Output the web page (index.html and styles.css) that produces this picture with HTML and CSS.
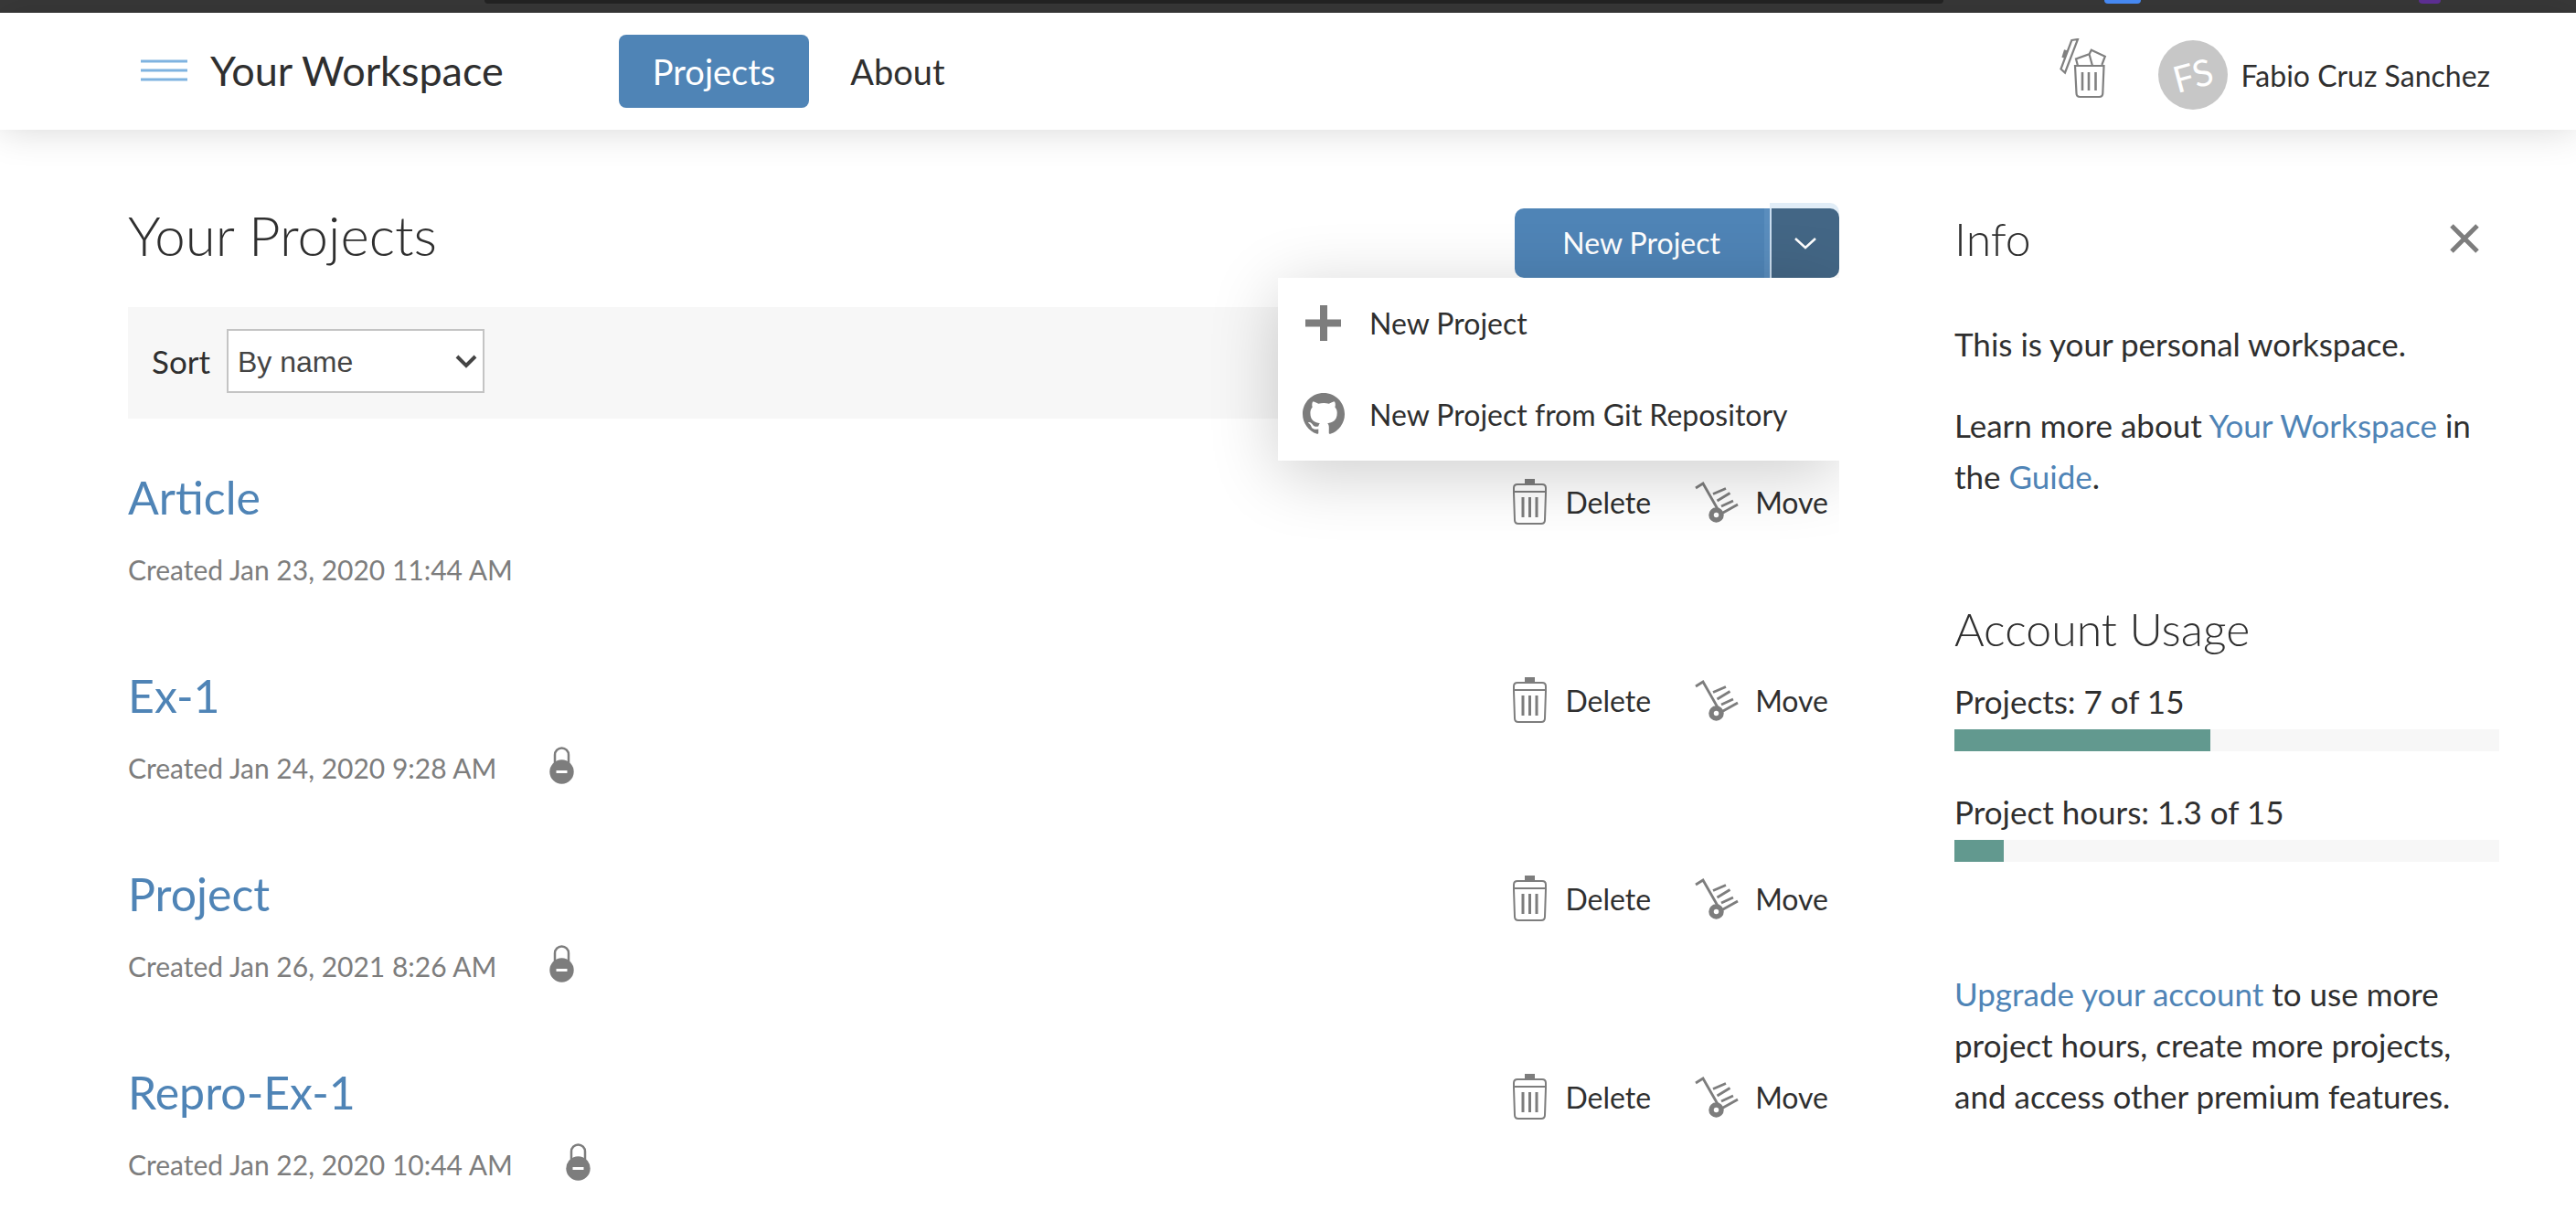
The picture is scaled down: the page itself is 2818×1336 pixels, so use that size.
FILE: index.html
```html
<!DOCTYPE html>
<html lang="en">
<head>
<meta charset="utf-8">
<title>Your Workspace</title>
<meta name="viewport" content="width=device-width, initial-scale=1">
<link rel="stylesheet" href="styles.css">
</head>
<body>
<svg class="sprite" aria-hidden="true">
  <symbol id="icon-trash" viewBox="0 0 40 52">
    <path d="M14 1h11v5H14z" fill="currentColor"/>
    <path d="M2 17V11q0-4 4-4h27q4 0 4 4v6" fill="none" stroke="currentColor" stroke-width="2"/>
    <path d="M1 15h37" stroke="currentColor" stroke-width="2"/>
    <path d="M2 16l1 30q0 4 4 4h25q4 0 4-4l1-30" fill="none" stroke="currentColor" stroke-width="2"/>
    <path d="M12 21v22M19.500 21v22M27 21v22" stroke="currentColor" stroke-width="3"/>
  </symbol>
  <symbol id="icon-move" viewBox="0 0 48 46">
    <path d="M1 8l8-5 16 28" fill="none" stroke="currentColor" stroke-width="2.800"/>
    <path d="M20 14.500l14-6M24.500 22l14-8.500M29 28l13-6M30 35.500l17-9.500" stroke="currentColor" stroke-width="2.800"/>
    <circle cx="23.500" cy="37.500" r="5.500" fill="none" stroke="currentColor" stroke-width="5.500"/>
  </symbol>
  <symbol id="icon-lock" viewBox="0 0 28 42">
    <path d="M6 18V9a7.500 7.500 0 0 1 15 0v9" fill="none" stroke="currentColor" stroke-width="2.500"/>
    <circle cx="13.500" cy="27.500" r="13.200" fill="currentColor"/>
    <path d="M7.500 27.500h12" stroke="#fff" stroke-width="3"/>
  </symbol>
</svg>

<div class="tabstrip" aria-hidden="true">
  <span class="tabstrip-address"></span>
  <span class="tabstrip-blue"></span>
  <span class="tabstrip-purple"></span>
</div>

<header class="header">
  <button class="menu-toggle" type="button" aria-label="Open menu">
    <svg width="52" height="24" viewBox="0 0 52 24"><path d="M0 2h51M0 12h51M0 22h51" stroke="#7fb3e0" stroke-width="3"/></svg>
  </button>
  <div class="brand">Your Workspace</div>
  <nav class="nav">
    <a class="nav-link nav-link-active" href="#projects">Projects</a>
    <a class="nav-link" href="#about">About</a>
  </nav>
  <div class="account">
    <button class="bin" type="button" aria-label="Trash">
      <svg width="52" height="80" viewBox="0 0 52 80" fill="none" stroke="#808080" stroke-width="2.200">
        <path d="M13.300 2l6.700-1L6 37.500l-4.500-4z"/>
        <path d="M6.700 12.700l-2.600 8.500" stroke-width="3.500"/>
        <path d="M17 30h31.500l-1.200 30q0 4-4 4H22.500q-4 0-4-4z"/>
        <path d="M20 30l-2-7.500 14.500-5.300L36 30M32.200 18l2.600-5.300 15 7L46.300 29"/>
        <path d="M25 37v20M32 37v20M39.500 37v20" stroke-width="2.600"/>
      </svg>
    </button>
    <span class="avatar"><span class="avatar-text">FS</span></span>
    <a class="account-name" href="#account">Fabio Cruz Sanchez</a>
  </div>
</header>

<div class="page">
  <main class="main">
    <div class="main-head">
      <h1 class="title">Your Projects</h1>
      <div class="split">
        <button class="split-main" type="button">New Project</button>
        <button class="split-toggle" type="button" aria-label="More options" aria-expanded="true">
          <svg width="26" height="16" viewBox="0 0 26 16"><path d="M2 3l11 10L24 3" fill="none" stroke="#fff" stroke-width="2.500"/></svg>
        </button>
        <div class="dropdown">
          <button class="dropdown-item" type="button">
            <svg width="46" height="46" viewBox="0 0 46 46"><path d="M23 4v39M3 23.500h39" stroke="#7d7d7d" stroke-width="8"/></svg>
            New Project
          </button>
          <button class="dropdown-item" type="button">
            <svg width="46" height="46" viewBox="0 0 16 16"><path fill="#7d7d7d" d="M8 0C3.580 0 0 3.580 0 8c0 3.540 2.290 6.530 5.470 7.590.4.070.55-.17.55-.38 0-.19-.010-.82-.010-1.490-2.010.37-2.530-.49-2.690-.94-.090-.23-.48-.94-.82-1.130-.28-.15-.68-.52-.010-.53.63-.010 1.080.58 1.230.82.72 1.210 1.870.87 2.330.66.070-.52.28-.87.51-1.070-1.780-.2-3.640-.89-3.640-3.950 0-.87.31-1.590.82-2.150-.080-.2-.36-1.020.080-2.120 0 0 .67-.21 2.200.82.64-.18 1.320-.27 2-.27s1.360.090 2 .27c1.530-1.040 2.200-.82 2.200-.82.44 1.100.16 1.920.080 2.120.51.56.82 1.270.82 2.150 0 3.070-1.870 3.750-3.650 3.950.29.25.54.73.54 1.480 0 1.070-.010 1.930-.010 2.200 0 .21.15.46.55.38A8.010 8.010 0 0 0 16 8c0-4.420-3.580-8-8-8z"/></svg>
            New Project from Git Repository
          </button>
        </div>
      </div>
    </div>

    <div class="toolbar">
      <label for="sort">Sort</label>
      <span class="select-box">
        <select id="sort" class="select"><option>By name</option><option>By date created</option></select>
        <svg class="select-arrow" width="24" height="16" viewBox="0 0 24 16"><path d="M2 2l10 10L22 2" fill="none" stroke="#444" stroke-width="4"/></svg>
      </span>
    </div>

    <ul class="projects" id="projects">
      <li class="project">
        <div class="project-head">
          <h2 class="project-title"><a href="#article">Article</a></h2>
          <button class="action" type="button"><svg width="40" height="52"><use href="#icon-trash"/></svg>Delete</button>
          <button class="action" type="button"><svg width="48" height="46"><use href="#icon-move"/></svg>Move</button>
        </div>
        <div class="project-meta">Created Jan 23, 2020 11:44 AM</div>
      </li>
      <li class="project">
        <div class="project-head">
          <h2 class="project-title"><a href="#ex-1">Ex-1</a></h2>
          <button class="action" type="button"><svg width="40" height="52"><use href="#icon-trash"/></svg>Delete</button>
          <button class="action" type="button"><svg width="48" height="46"><use href="#icon-move"/></svg>Move</button>
        </div>
        <div class="project-meta">Created Jan 24, 2020 9:28 AM<svg width="28" height="42"><use href="#icon-lock"/></svg></div>
      </li>
      <li class="project">
        <div class="project-head">
          <h2 class="project-title"><a href="#project">Project</a></h2>
          <button class="action" type="button"><svg width="40" height="52"><use href="#icon-trash"/></svg>Delete</button>
          <button class="action" type="button"><svg width="48" height="46"><use href="#icon-move"/></svg>Move</button>
        </div>
        <div class="project-meta">Created Jan 26, 2021 8:26 AM<svg width="28" height="42"><use href="#icon-lock"/></svg></div>
      </li>
      <li class="project">
        <div class="project-head">
          <h2 class="project-title"><a href="#repro-ex-1">Repro-Ex-1</a></h2>
          <button class="action" type="button"><svg width="40" height="52"><use href="#icon-trash"/></svg>Delete</button>
          <button class="action" type="button"><svg width="48" height="46"><use href="#icon-move"/></svg>Move</button>
        </div>
        <div class="project-meta">Created Jan 22, 2020 10:44 AM<svg width="28" height="42"><use href="#icon-lock"/></svg></div>
      </li>
    </ul>
  </main>

  <aside class="info">
    <div class="info-head">
      <h2 class="info-title">Info</h2>
      <button class="close" type="button" aria-label="Close">
        <svg width="32" height="32" viewBox="0 0 32 32"><path d="M2 2l28 28M30 2L2 30" stroke="#7d7d7d" stroke-width="5"/></svg>
      </button>
    </div>
    <div class="info-text">
      <p>This is your personal workspace.</p>
      <p>Learn more about <a href="#workspace">Your Workspace</a> in the <a href="#guide">Guide</a>.</p>
    </div>
    <h2 class="info-title usage-title">Account Usage</h2>
    <div class="meter">
      <label for="projects-used">Projects: 7 of 15</label>
      <progress id="projects-used" value="47" max="100"></progress>
    </div>
    <div class="meter">
      <label for="hours-used">Project hours: 1.3 of 15</label>
      <progress id="hours-used" value="9" max="100"></progress>
    </div>
    <p class="upgrade"><a href="#upgrade">Upgrade your account</a> to use more project hours, create more projects, and access other premium features.</p>
  </aside>
</div>
</body>
</html>
```
FILE: styles.css
```css
* {
  box-sizing: border-box;
}

body {
  margin: 0;
  background: #fff;
  color: #2f2f2f;
  font-family: Lato, sans-serif;
  font-size: 32px;
}

a {
  color: #4f84b6;
  text-decoration: none;
}

button {
  margin: 0;
  padding: 0;
  border: 0;
  background: none;
  color: inherit;
  font: inherit;
  cursor: pointer;
}

svg {
  display: block;
  flex: none;
}

h1, h2, p, ul {
  margin: 0;
  padding: 0;
}

.sprite {
  position: absolute;
  width: 0;
  height: 0;
}

/* strip above the header */
.tabstrip {
  display: grid;
  grid-template-columns: 530fr 1596fr 176fr 40px 304fr 24px 148fr;
  height: 14px;
  background: #393939;
}

.tabstrip span {
  height: 4px;
  border-radius: 0 0 4px 4px;
}

.tabstrip-address {
  grid-column: 2;
  background: #222;
}

.tabstrip-blue {
  grid-column: 4;
  background: #4688f1;
}

.tabstrip-purple {
  grid-column: 6;
  background: #5c2e91;
}

/* header */
.header {
  display: flex;
  align-items: center;
  height: 128px;
  padding: 0 94px 2px 154px;
  background: #fff;
  box-shadow: 0 0 40px rgba(0, 0, 0, .16);
}

.brand {
  margin-left: 24px;
  font-size: 45px;
  line-height: 52px;
}

.nav {
  display: flex;
  gap: 8px;
  margin-left: 126px;
  padding-top: 2px;
}

.nav-link {
  padding: 0 37px;
  border-radius: 8px;
  color: #2f2f2f;
  font-size: 38px;
  line-height: 80px;
}

.nav-link-active {
  background: #4f84b6;
  color: #fff;
}

.account {
  display: flex;
  align-items: center;
  margin-left: auto;
  padding-top: 10px;
}

.avatar {
  display: grid;
  place-items: center;
  width: 76px;
  height: 76px;
  margin-left: 56px;
  border-radius: 50%;
  background: #c7c7c7;
}

.avatar-text {
  color: #fff;
  font-size: 40px;
  line-height: 40px;
  transform: rotate(-15deg);
}

.account-name {
  margin-left: 15px;
  color: #2f2f2f;
}

/* page body */
.page {
  display: grid;
  grid-template-columns: 1fr 596px;
  gap: 126px;
  padding: 86px 84px 32px 140px;
}

.main-head {
  display: flex;
  justify-content: space-between;
  align-items: flex-start;
}

.title {
  font-size: 60px;
  font-weight: 300;
  line-height: 58px;
}

.split {
  position: relative;
  display: flex;
  color: #fff;
}

.split-main {
  height: 76px;
  padding: 0 54px 2px 52px;
  border-radius: 10px 0 0 10px;
  background: #4f84b6;
}

.split-toggle {
  display: grid;
  place-items: center;
  width: 76px;
  height: 76px;
  border-left: 2px solid #c9dcee;
  border-radius: 0 10px 10px 0;
  background: #436685;
  box-shadow: 0 -6px 0 #e1edf7, -6px 0 0 #5a8dbd;
}

.dropdown {
  position: absolute;
  top: 100%;
  right: 0;
  z-index: 2;
  width: 614px;
  background: #fff;
  color: #2f2f2f;
  box-shadow: 0 14px 76px rgba(0, 0, 0, .2);
  clip-path: inset(-120px 0 -120px -120px);
}

.dropdown-item {
  display: flex;
  align-items: center;
  gap: 27px;
  width: 100%;
  height: 100px;
  padding: 0 27px 2px;
  text-align: left;
}

.toolbar {
  display: flex;
  align-items: center;
  gap: 18px;
  margin-top: 32px;
  padding: 24px 26px 28px;
  background: #f7f7f7;
  font-size: 35px;
}

.select-box {
  position: relative;
}

.select {
  display: block;
  appearance: none;
  width: 282px;
  height: 70px;
  margin: 0;
  padding: 2px 10px 0;
  border: 2px solid #c4c4c4;
  border-radius: 0;
  background: #fff;
  color: #444;
  font: 32px "Liberation Sans", Arial, sans-serif;
}

.select-arrow {
  position: absolute;
  top: 28px;
  right: 8px;
  pointer-events: none;
}

.projects {
  display: grid;
  gap: 95px;
  margin-top: 61px;
  list-style: none;
}

.project-head {
  display: flex;
  align-items: center;
  height: 60px;
  padding-right: 12px;
}

.project-title {
  align-self: flex-start;
  margin-right: auto;
  font-size: 50px;
  font-weight: 400;
  line-height: 50px;
}

.action {
  display: flex;
  align-items: center;
  gap: 18px;
  margin-left: 48px;
}

.action svg,
.project-meta svg {
  color: #7d7d7d;
}

.project-meta {
  display: flex;
  align-items: center;
  gap: 58px;
  height: 36px;
  margin-top: 26px;
  color: #7d7d7d;
  font-size: 30px;
}

.project-meta svg {
  margin-bottom: 4px;
}

/* side panel */
.info {
  font-size: 35px;
}

.info-head {
  display: flex;
  align-items: center;
  justify-content: space-between;
  padding: 2px 22px 0 0;
}

.info-title {
  font-size: 50px;
  font-weight: 300;
  line-height: 62px;
}

.info-text {
  display: grid;
  gap: 33px;
  margin-top: 56px;
}

.info-text p,
.upgrade {
  line-height: 56px;
}

.usage-title {
  margin-top: 108px;
}

.meter {
  display: grid;
  gap: 9px;
  margin-top: 44px;
}

.usage-title + .meter {
  margin-top: 26px;
}

.meter label {
  line-height: 44px;
}

.meter progress {
  display: block;
  appearance: none;
  width: 100%;
  height: 24px;
  border: 0;
  background: #f7f7f7;
}

.meter progress::-webkit-progress-bar {
  background: #f7f7f7;
}

.meter progress::-webkit-progress-value {
  background: #62998f;
}

.upgrade {
  margin-top: 116px;
}
```
